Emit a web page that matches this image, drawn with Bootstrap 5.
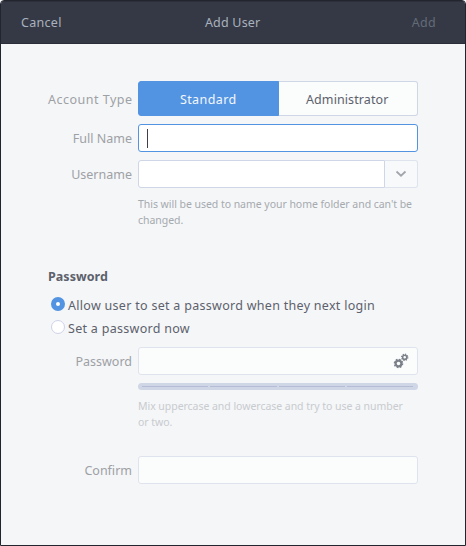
<!DOCTYPE html>
<html lang="en">
<head>
<meta charset="utf-8">
<title>Add User</title>
<link rel="stylesheet" href="https://cdn.jsdelivr.net/npm/bootstrap@5.3.0/dist/css/bootstrap.min.css">
<style>
html{background:#fff}
body{font-family:"Noto Sans",sans-serif;font-size:12.5px;line-height:18px;color:#5c616c;background:#fff;height:546px;overflow:hidden;letter-spacing:.29px}
.window{height:546px;background:#f5f6f8;border:1px solid #23252e;border-radius:4px 4px 0 0;overflow:hidden}
.titlebar{height:43px;background:#353945;border-top:1px solid #2d303b;border-bottom:1px solid #2b2e39;padding:0 29px 0 20px;color:#a9b1be}
.titlebar .btn{font-size:inherit;line-height:18px;color:inherit;letter-spacing:inherit}
.titlebar .title{letter-spacing:.2px;margin-right:8px}
.titlebar .btn:disabled{color:#636b78;opacity:1;border:0}
.form-area{padding:37px 47px 0}
.line{display:grid;grid-template-columns:84px 280px;column-gap:6px;align-items:center}
.caption{text-align:right;color:#9da1a5;white-space:nowrap;letter-spacing:0;padding-top:2px}
.caption-wide{letter-spacing:.5px;margin-right:-.5px}
.switch .btn{height:35px;font-size:inherit;line-height:18px;letter-spacing:.4px;border-radius:3px;padding:2px 0 0;border:1px solid #cfd6e6;background:#fbfcfc;color:#5c616c}
.switch .btn.active{background:#5294e2;border-color:#5294e2;color:#f4f7fc}
.switch .btn+.btn{letter-spacing:.1px;border-left:0;margin-left:0}
.field{height:28px;border:1px solid #cfd6e6;border-radius:3px;background:#fff}
.field-focus{border-color:#5294e2;padding-left:8px}
.caret{width:1px;height:19px;background:#3c404a}
.field-off{border-color:#dfe3ee;background:#fbfdfc}
.drop{width:33px;border-color:#dfe3ee;background:#f8f9fb;border-radius:0 3px 3px 0;border-left:0}
.hint{font-size:10.5px;line-height:16px;color:#a5aaaf;letter-spacing:-.04px;white-space:nowrap}
.hint-off{color:#c8cbcf}
.heading{margin-top:40px;margin-bottom:8px;letter-spacing:.05px}
.choice{height:23px;gap:3px;padding-left:3px;white-space:nowrap}
.dot{width:14px;height:14px;border-radius:50%;border:1px solid #cfd3e8;background:#fff;margin-top:-3px}
.dot-on{border:5px solid #5294e2}
.password-line{margin-top:7px}
.confirm-line{margin-top:26px}
.level{height:7px;border-radius:3.5px;background:#cfd6e6;padding:0 5px 0 4px;gap:2px}
.level span{height:1px;flex:1;background:#b4bdd5}
</style>
<script src="https://cdn.jsdelivr.net/npm/bootstrap@5.3.0/dist/js/bootstrap.bundle.min.js"></script>
</head>
<body>
<div class="window">
  <header class="titlebar d-flex justify-content-between align-items-center">
    <button class="btn p-0 border-0">Cancel</button>
    <span class="title">Add User</span>
    <button class="btn p-0" disabled>Add</button>
  </header>
  <main class="form-area">
    <div class="line">
      <div class="caption caption-wide">Account Type</div>
      <div class="btn-group switch w-100">
        <button class="btn active w-50">Standard</button>
        <button class="btn w-50">Administrator</button>
      </div>
    </div>
    <div class="line mt-2">
      <div class="caption">Full Name</div>
      <div class="field field-focus d-flex align-items-center"><span class="caret"></span></div>
    </div>
    <div class="line mt-2">
      <div class="caption">Username</div>
      <div class="d-flex">
        <div class="field flex-grow-1 rounded-end-0"></div>
        <div class="field drop d-flex align-items-center justify-content-center">
          <svg width="12" height="8" viewBox="0 0 12 8" fill="none" stroke="#a2a6ac" stroke-width="1.8"><path d="M1.500 1.500 6 5.700l4.500-4.200"/></svg>
        </div>
      </div>
    </div>
    <div class="line mt-2">
      <div></div>
      <div class="hint">This will be used to name your home folder and can't be<br>changed.</div>
    </div>
    <div class="fw-bold heading">Password</div>
    <div class="choice d-flex align-items-center"><span class="dot dot-on"></span><span>Allow user to set a password when they next login</span></div>
    <div class="choice d-flex align-items-center"><span class="dot"></span><span>Set a password now</span></div>
    <div class="line password-line">
      <div class="caption">Password</div>
      <div class="field field-off d-flex align-items-center justify-content-end pe-2">
        <svg width="16" height="16" viewBox="0 0 16 16" fill="none" stroke="#7c8089">
          <circle cx="5.500" cy="10.500" r="2.900" stroke-width="2.200"/>
          <circle cx="5.500" cy="10.500" r="4.100" stroke-width="1.400" stroke-dasharray="1.610 1.610"/>
          <circle cx="11.700" cy="4.300" r="2.100" stroke-width="1.600"/>
          <circle cx="11.700" cy="4.300" r="3.100" stroke-width="1.200" stroke-dasharray="1.217 1.217"/>
        </svg>
      </div>
    </div>
    <div class="line mt-2">
      <div></div>
      <div class="level d-flex align-items-center"><span></span><span></span><span></span><span></span></div>
    </div>
    <div class="line mt-2">
      <div></div>
      <div class="hint hint-off">Mix uppercase and lowercase and try to use a number<br>or two.</div>
    </div>
    <div class="line confirm-line">
      <div class="caption">Confirm</div>
      <div class="field field-off"></div>
    </div>
  </main>
</div>
</body>
</html>
